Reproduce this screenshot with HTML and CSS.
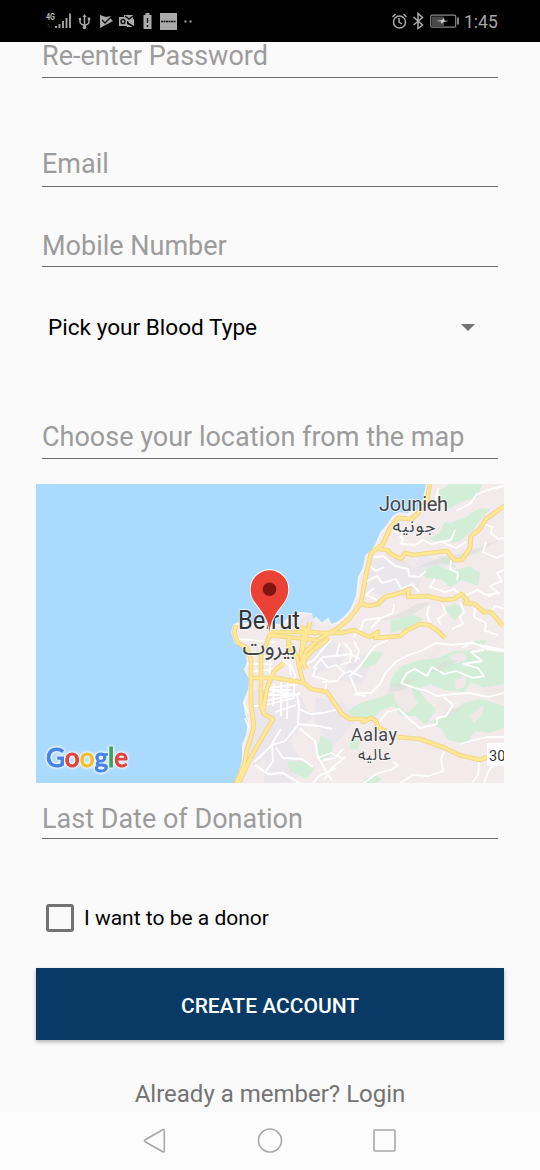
FILE: index.html
```html
<!DOCTYPE html>
<html lang="en">
<head>
<meta charset="utf-8">
<title>Create account</title>
<link rel="stylesheet" href="styles.css">
</head>
<body>
<div class="screen">
<header class="status">
  <svg class="status-left" width="160" height="42" viewBox="40 0 160 42">
    <text class="net" x="46" y="20" textLength="9" lengthAdjust="spacingAndGlyphs">4G</text><text class="tiny" x="47" y="28">1↓</text>
    <path class="bars" d="M56 28v-2M59.500 28v-4M63 28v-7M66.500 28v-10M70 28V13.500"/>
    <g class="line"><path d="M84.500 16v12M80 19v3q0 2 4.500 3.500M89 18v4q0 2-4.500 3.500"/></g>
    <g class="solid"><path d="M82.500 17l2-3 2 3z"/><circle cx="84.500" cy="27.500" r="1.800"/><circle cx="80" cy="19" r="1.300"/><path d="M87.700 17.500h2.600v2.600h-2.600z"/>
    <path d="M100 15q3 1 6 2l5-1-1 2 3 3-13 7z"/></g>
    <path class="cut" d="M102 20l3 3 6-6"/>
    <g class="solid"><path d="M124 15h9v4l-4 3-5-3zM119 17h8v9h-8zM128 21l6-2v7l-5-3zM127 24l6 3h-6z"/></g>
    <circle class="cut" cx="123" cy="21.500" r="2"/><path class="cut" d="M125 16l4 3 4-3"/>
    <g class="solid"><path d="M143.500 15h2v-2h4v2h2v14h-8zM160 13h17v17h-17zM184.500 20.500h2v2h-2zM189.500 20.500h2v2h-2z"/></g>
    <path class="cut" d="M147.500 18v5M147.500 25v2"/><path class="cut dash" d="M161 21.500h15"/>
  </svg>
  <div class="status-right">
    <svg width="70" height="42" viewBox="390 0 70 42">
      <g class="line"><circle cx="399.500" cy="22" r="6"/><path d="M399 18v4l3 2M392.500 17l3-3M403.500 14l3 3M413.500 17l9 8-4.500 3.500v-15l4.500 4-9 7.500"/></g>
      <rect class="battery" x="430.700" y="15.200" width="25" height="12" rx="1.500"/>
      <path class="charge" d="M432 16.500h12v9.500h-12z"/>
      <path class="bolt" d="M436 21l6-1 2-2 .5 2.500 4 .5-5 1-2 2-.5-2.500z"/>
      <path class="line" d="M458 17.500v7"/>
    </svg>
    <span class="clock">1:45</span>
  </div>
</header>
<main class="form">
  <div class="field first"><span>Re-enter Password</span></div>
  <div class="field email"><span>Email</span></div>
  <div class="field mobile"><span>Mobile Number</span></div>
  <div class="picker"><span>Pick your Blood Type</span><i class="caret"></i></div>
  <div class="field place"><span>Choose your location from the map</span></div>
  <svg class="map" viewBox="36 484 468 299">
    <path class="sea" d="M36 484h468v299H36z"/>
    <path class="land" d="M427 484L424 500 418 511 408 514 399 513 393 517 387 526 381 533 376 545 372 551 366 556 364 568 359 577 357 596 351 610 345 617 337 623 331 625 328 619 322 624 316 618 312 622 311 614 300 613 290 617 282 625 254 624 240 623 234 625 232 633 236 643 246 648 248 662 245 670 250 678 249 690 244 702 246 714 249 722 247 735 243 745 243 760 236 786H508V480H427z"/>
    <g class="urban"><path d="M305 642L328 637 345 650 340 667 313 674zM254 690L294 686 312 718 278 750 254 766 249 745zM371 560L398 556 423 574 414 598 366 592zM316 697L346 704 354 722 332 748 314 720zM355 655L376 655 362 684 338 680zM420 555L450 563 433 577 413 571zM266 746L289 740 306 770 290 783H264zM285 625L312 614 316 627 292 632z"/></g>
    <g class="park">
      <path d="M439 491L450 484H482L478 497 463 501 449 509 443 503zM451 523L466 517 480 508 490 509 481 519 472 531 459 542 442 543 429 539 439 533 445 522zM438 556L449 558 456 568 444 564zM420 571L436 565 452 571 470 566 480 573 478 586 462 580 450 587 441 579 426 578zM391 620L414 615 424 619 409 629 390 633zM442 608L456 604 463 610 455 621 448 614zM474 641L487 640 482 648 472 645z"/>
      <path d="M364 658L373 651 383 653 375 665 362 668zM402 666L420 660 438 658 454 651 483 650 504 653V689L488 690 471 682 464 692 445 690 430 684 418 689 427 701 436 709 426 725 415 716 401 716 394 706 381 710 372 720 358 721 347 711 360 703 382 697 398 690 389 684 395 673zM504 706V728L490 733 475 731 466 744 448 740 442 729 429 722 452 715 463 703 482 699zM321 735L332 741 332 755 320 761 317 748zM287 761L307 762 315 768 306 779 290 771zM350 740L360 739 358 750 350 749zM364 780L374 775 382 779 376 783H364z"/>
    </g>
    <g class="tan"><path d="M449 656L462 652 468 659 455 664zM454 681L467 674 465 687 456 690zM470 716L484 704 482 714 474 724zM424 653L443 646 440 654 429 660zM391 689L409 684 418 704 407 713 397 704zM435 700L450 698 449 714 436 707zM481 688L504 684V703L486 697z"/></g>
    <g class="hill"><path d="M416 568q20-11 40-13 24-7 48-18l-25 15-29 11zM378 621q26-7 38-17l15-2-20 14zM391 684l25-6-12 12-17 3zM427 672l18-11 14-1-20 12zM440 718l9-8 17-5-14 11z"/></g>
    <g class="lanes">
      <path d="M390 526l13 13-2 5 14 1 8-5 8 4 20-4 4-10M406 519l5-8 10 1 4-4M438 488l-2 11 5 2-9 10M456 511l15-8 6-9 14-5 13-3M440 541l16 7 10-6M374 557l9-1 12 10 13 3 1 7 10 1 7-6M364 583l13-7 5 7 14-4 5 10 11-5 7 8M374 588l-8 7 11 5M384 567l-8 4-6-5M435 579l-5 8 15 5 9-3 9 8 14-7 9 5 14-2M451 560l-1 9 8 4-1 7M484 524l8 3-1 6 7 6 6-1M486 542l-3 10 14 6 7-4M504 570l-7 3 5 8-12 5 7 6-9 5"/>
      <path d="M429 606l-2 8 3 9M442 604l4 9-8 6 3 6M460 602l4 10-4 5 3 7-11 5M475 608l-1 9 12 6-1 8 13 4M490 613l5-7 9 3M394 604l-1 9-12 5-10 10M380 618l-16 2-3 9-8 8"/>
      <path d="M504 650L484 646 470 643 452 645 436 643 423 650 407 656 397 661 386 672 380 684 371 693H357L350 676 360 666 368 655 375 646 388 640M401 683L407 673 415 669 427 676 432 667 444 674 456 671 473 678 484 676 478 668 463 664 482 661 471 652 484 650M401 683L415 688 427 691 437 696 454 694 470 693 488 697 504 693M444 697L453 705 446 716 437 718 437 724 420 728 408 718 399 709 387 712 377 725M462 648L472 642 487 649 504 651"/>
      <path d="M332 639l-11 12-7 9-14 8M340 643l-4 13-13 1-10 11M344 643l7 8-1 11-10 3M320 658l8 10 8-3 9 8 5-2 12 6M316 667l-3 9 14 4-2 10M354 641l5 10-4 11M336 656l15-2 9 5M344 673l-7 8-15 1M300 692l-3 3 2 14 11 5 13-1 16-4"/>
      <path d="M297 695l-22-4-14 7M274 684l-1 22M281 682v34M288 678l-1 41M294 677v21M265 701l35-7M275 712l21-7M251 706h10l33-8M259 688h10l28-4M267 690h24M269 695h18M299 700l-1 25-13 16-13 4 1 16-7 10M298 724l21 2 13 3M299 728l16 13 3 16 14 24M323 760l12-2 8-9M336 768l-17 8-6 7M276 748l7 10 19 1 11 8M255 765l13 9 15-1 18 11M254 762l16-15 11-18M244 703l4 10M245 718l4 10M247 664h25M250 672l30-4M270 647v29M285 652l11 25M238 639l37 3M282 660l7 5 2 10"/>
      <path d="M345 757l-13 11-8 12M390 771l8-6-5-3M392 769l-16 5-12 9M444 752l-3 6 2 13-15 5-15-1-13 8M479 762l-1 13-6 8M495 764l-6 6-5 13M460 744l15-4 12-3 17 0M317 758l14-5 11 5M354 694l12 2"/>
    </g>
    <g class="casing">
      <path id="north" d="M430 484l-3 16-8 12-7 7-14-1-8 10-7 16-12 9-5 22-5 28-11 15-13 11-18 10-13 12-6 16M379 549l8 1 4 4 10 5 4-6 8 2 34-4 7 9 8 0 8-12 1-12 8-6 7-11 17-12 4-2M360 603l8 3 10-2 7-7 19-5 5-3-1 8 19-1 17 4 10-1 7-5 6 6-2 3 10 1 9 8 7 0 12 14M268 632l32 0 24 1 17 0 13-3 15 7 9-5-3 6 25-2 6-5 14-7 9 1 9 6 7 7"/>
      <path id="south" d="M288 641l9 16 6 25 8 7 16 3 15 22 8 5 14 0-1 3 8-4 5 3 2 6 8 4M397 737l23 2 25 9 14 7 21 5 10-4M304 631l-3 24 5 14M236 625l-2 8 4 10 9 5 4 12v44l3 23-7 23-3 15-8 18M261 651v56l3 7 9 5-22 38-13 28M284 663l-10 8-7 17-4 24M251 678h25l29 5M268 635l49 5M300 627l17 7M310 622l-8 29M289 637l-1 16M302 663l9-11 18-14M270 635l-5 12"/>
    </g>
    <g class="roads"><use href="#north"/><use href="#south"/></g>
    <path class="badge" d="M487 743h17v23h-17z"/>
    <text class="road-no" x="489" y="761">30</text>
    <text class="city" x="379" y="511" textLength="69">Jounieh</text>
    <text class="arabic" x="414" y="532" textLength="43">جونيه</text>
    <text class="city big" x="238" y="629" textLength="62" lengthAdjust="spacingAndGlyphs">Beirut</text>
    <text class="arabic big-ar" x="269.500" y="655" textLength="54">بيروت</text>
    <text class="city small" x="351" y="741" textLength="46">Aalay</text>
    <text class="arabic small-ar" x="374.500" y="760" textLength="33">عاليه</text>
    <path class="pin" d="M269.500 632c-1-12-6-18-12.500-27-4-5-6.300-9-6.300-16a18.800 18.800 0 0 1 37.600 0c0 7-2.300 11-6.300 16-6.500 9-11.500 15-12.500 27z"/>
    <circle class="pin-dot" cx="269.500" cy="589.300" r="6.800"/>
    <text class="google" x="46" y="766.500" textLength="82" lengthAdjust="spacingAndGlyphs"><tspan class="b">G</tspan><tspan class="r">o</tspan><tspan class="y">o</tspan><tspan class="b">g</tspan><tspan class="g">l</tspan><tspan class="r">e</tspan></text>
  </svg>
  <div class="field date"><span>Last Date of Donation</span></div>
  <label class="donor"><i class="box"></i><span>I want to be a donor</span></label>
  <button class="create">CREATE ACCOUNT</button>
  <div class="login">Already a member? Login</div>
</main>
<nav class="nav">
  <svg width="540" height="58" viewBox="0 1112 540 58"><path d="M145.200 1139.700l17.500-10q1.600-.8 1.600 1v20q0 1.800-1.600 1l-17.500-10q-1.500-1 0-2z"/><circle cx="270" cy="1140.500" r="11.500"/><rect x="374" y="1130" width="21" height="21" rx="1"/></svg>
</nav>
</div>
</body>
</html>
```
FILE: styles.css
```css
* { box-sizing: border-box; }
body { margin: 0; background: #fafafa; font-family: Roboto, "Noto Sans", sans-serif; }
.screen { width: 540px; height: 1170px; overflow: hidden; display: flex; flex-direction: column; }
.status { height: 42px; flex: none; background: #000; display: flex; justify-content: space-between; padding: 0 43px 0 40px; }
.status svg { display: block; }
.status-right { display: flex; align-items: center; gap: 4px; color: #a6a6a6; font-size: 17.500px; }
.clock { line-height: 42px; width: 33px; padding-top: 1px; white-space: nowrap; }
.net { font-size: 9px; font-weight: 700; fill: #b5b5b5; }
.tiny { font-size: 6px; fill: #444; }
.bars { stroke: #aaa; stroke-width: 1.8; fill: none; }
.line { stroke: #aaa; stroke-width: 1.5; fill: none; }
.solid { fill: #aaa; }
.cut { stroke: #111; stroke-width: 1.4; fill: none; }
.dash { stroke-dasharray: 2 .5; }
.battery { fill: none; stroke: #888; stroke-width: 1.2; }
.charge { fill: #484848; }
.bolt { fill: #ccc; }

.form { height: 1070px; flex: none; display: flex; flex-direction: column; padding: 0 36px; }
.field { flex: none; margin: 0 6px; border-bottom: 1px solid #6f6f6f; color: #9c9c9c; font-size: 27px; line-height: 32px; white-space: nowrap; display: flex; align-items: flex-end; padding-bottom: 6px; }
.first { height: 36px; padding-bottom: 5px; }
.email { height: 109px; }
.mobile { height: 80px; padding-bottom: 4px; }
.picker { height: 122px; flex: none; display: flex; justify-content: space-between; padding: 0 29px 0 12px; font-size: 22.600px; line-height: 122px; color: #000; }
.caret { width: 0; height: 0; margin-top: 57px; border: 7.500px solid transparent; border-top-color: #737373; border-bottom: 0; }
.place { height: 70px; padding-bottom: 5px; }
.map { display: block; flex: none; width: 468px; height: 299px; margin-top: 25px; }
.date { height: 56px; padding-bottom: 3px; }
.donor { height: 129px; flex: none; padding: 28px 0 0 10px; display: flex; align-items: center; gap: 10px; font-size: 21px; color: #000; }
.box { width: 28px; height: 28px; border: 3px solid #737373; border-radius: 3px; }
.create { height: 72px; flex: none; border: 0; padding: 3px 0 0; background: #083a65; color: #fff; font: 500 21px Roboto, sans-serif; box-shadow: 0 2px 4px rgba(0, 0, 0, .3); }
.login { padding-top: 39px; text-align: center; color: #737373; font-size: 24px; line-height: 30px; }
.nav { height: 58px; background: #fcfcfc; }
.nav svg { display: block; fill: none; stroke: #a8a8a8; stroke-width: 1.6; }

.sea { fill: #abdaff; }
.land { fill: #f2eaeb; stroke: #f4f2f3; stroke-width: 2; }
.urban { fill: #ebe6ec; }
.park { fill: #d3eed7; }
.tan { fill: #f0e7e7; }
.hill { fill: #d9dcd6; opacity: .55; }
.lanes { fill: none; stroke: #fff; stroke-width: 1.8; stroke-linejoin: round; }
.casing { fill: none; stroke: #f0d27c; stroke-width: 4.6; stroke-linejoin: round; }
.roads { fill: none; stroke: #ffe796; stroke-width: 3; stroke-linejoin: round; }
.badge { fill: #fff; }
.road-no { font-size: 14.500px; fill: #333; }
.city { font-size: 20px; fill: #41464b; stroke: #fff; stroke-width: 2px; stroke-opacity: .65; paint-order: stroke; }
.big { font-size: 25px; fill: #303438; }
.small { font-size: 18px; }
.arabic { font-family: "Noto Sans Arabic", "DejaVu Sans", sans-serif; font-size: 18px; fill: #41464b; text-anchor: middle; stroke: #fff; stroke-width: 2px; stroke-opacity: .6; paint-order: stroke; }
.big-ar { font-size: 23px; }
.small-ar { font-size: 16px; }
.pin { fill: #ea4335; stroke: #fff; stroke-width: 1.8; paint-order: stroke; }
.pin-dot { fill: #811411; }
.google { font-family: Lato, sans-serif; font-size: 27.500px; font-weight: 500; stroke-width: 1px; filter: drop-shadow(0 0 1px #fff) drop-shadow(0 0 1.500px #fff); }
.b { fill: #4682e8; stroke: #4682e8; }
.r { fill: #df4540; stroke: #df4540; }
.y { fill: #efc02d; stroke: #efc02d; }
.g { fill: #3ba456; stroke: #3ba456; }
```
